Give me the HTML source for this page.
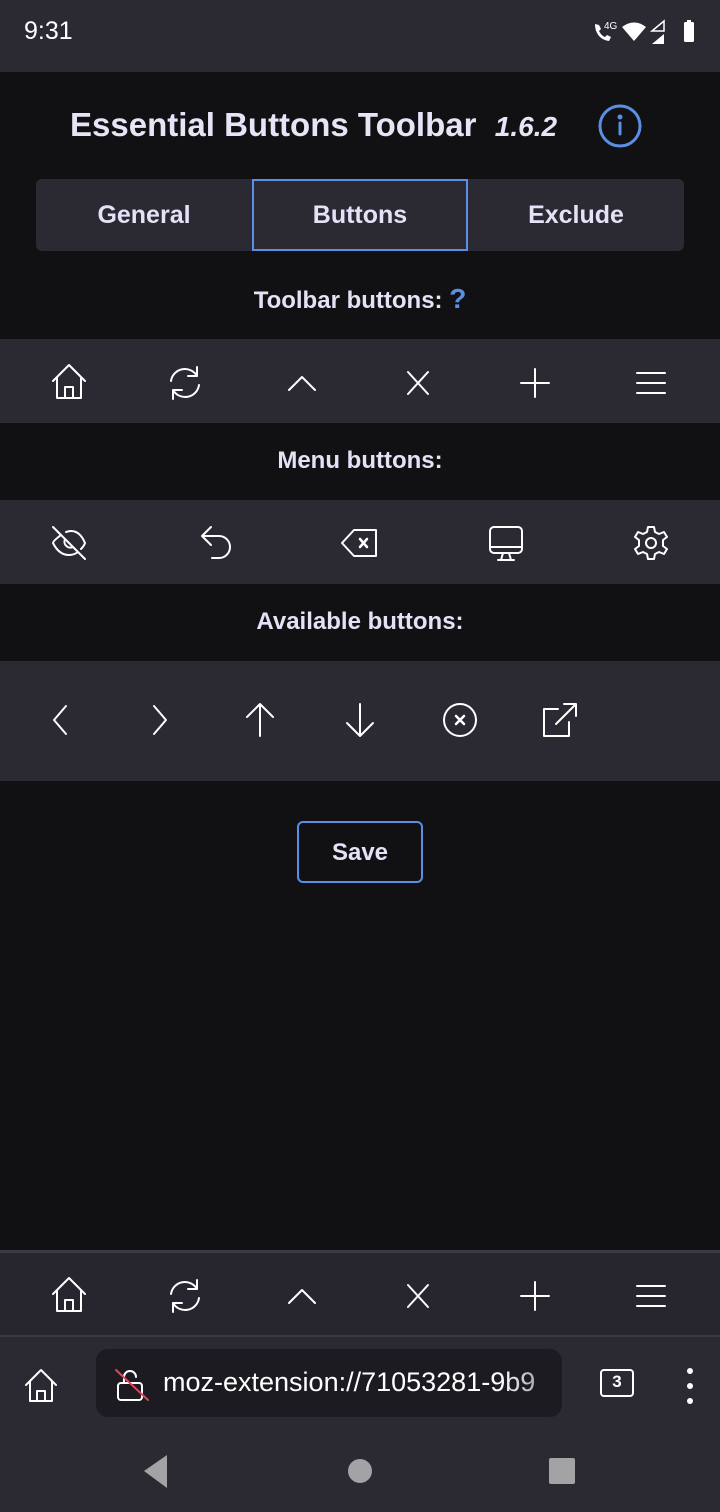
<!DOCTYPE html>
<html><head><meta charset="utf-8"><style>
*{margin:0;padding:0;box-sizing:border-box}
body{width:720px;height:1512px;background:#111113;font-family:"Liberation Sans",sans-serif;color:#e4e2f7;position:relative;overflow:hidden}
.abs{position:absolute}
.bar{position:absolute;left:0;width:720px;background:#2b2a33}
.t{position:absolute;left:0;width:720px;text-align:center;font-weight:bold;font-size:24px}
svg.i{position:absolute;overflow:visible}
svg.i *{fill:none;stroke:#fff;stroke-width:2;stroke-linecap:round;stroke-linejoin:round}
</style></head><body>
<div class="bar" style="top:0;height:72px"></div>
<div class="abs" style="left:24px;top:17px;font-size:25px;color:#fff">9:31</div>
<svg class="abs" style="left:592px;top:18px" width="112" height="28" viewBox="0 0 112 28">
<path d="M3 6c0 10 6 16 14 17l2-4-4-2-2 2c-3-1-5-4-6-6l2-2-2-4z" fill="#fff"/>
<text x="12" y="11" font-size="10" fill="#fff" font-family="Liberation Sans">4G</text>
<path d="M30 9q12-9 24 0l-12 14z" fill="#fff"/>
<path d="M60 13l12-10v10z" fill="none" stroke="#fff" stroke-width="1.5"/>
<path d="M60 26l12-10v10z" fill="#fff"/>
<rect x="92" y="4" width="10" height="20" rx="1.5" fill="#fff"/><rect x="95" y="2" width="4" height="3" fill="#fff"/>
</svg>
<div class="abs" style="left:70px;top:106px;font-size:33px;font-weight:bold;color:#e6e4f7;white-space:nowrap">Essential Buttons Toolbar&nbsp; <i style="font-size:28px;font-weight:bold">1.6.2</i></div>
<svg class="i" style="left:598px;top:104px" width="44" height="44"><circle cx="22" cy="22" r="20" style="stroke:#5b8fe6;stroke-width:3"/><line x1="22" y1="19" x2="22" y2="30" style="stroke:#5b8fe6;stroke-width:3"/><circle cx="22" cy="13" r="1.5" style="fill:#5b8fe6;stroke:#5b8fe6"/></svg>
<div class="abs" style="left:36px;top:179px;width:648px;height:72px;background:#2b2a33;border-radius:6px"></div>
<div class="abs" style="left:252px;top:179px;width:216px;height:72px;border:2px solid #5b8fe6"></div>
<div class="abs" style="left:36px;top:201px;width:216px;text-align:center;font-size:25px;font-weight:bold">General</div>
<div class="abs" style="left:252px;top:201px;width:216px;text-align:center;font-size:25px;font-weight:bold">Buttons</div>
<div class="abs" style="left:468px;top:201px;width:216px;text-align:center;font-size:25px;font-weight:bold">Exclude</div>
<div class="t" style="top:283px">Toolbar buttons: <span style="color:#5b8fe6;font-size:28px">?</span></div>
<div class="bar" style="top:339px;height:84px"></div>
<div class="t" style="top:447px">Menu buttons:</div>
<div class="bar" style="top:500px;height:84px"></div>
<div class="t" style="top:608px">Available buttons:</div>
<div class="bar" style="top:661px;height:120px"></div>
<div class="abs" style="left:297px;top:821px;width:126px;height:62px;border:2px solid #5b8fe6;border-radius:6px;text-align:center;line-height:60px;font-size:24px;font-weight:bold">Save</div>

<svg width="0" height="0" style="position:absolute"><defs>
<g id="home"><path d="M-16 -2L0 -18 16 -2M-12 -6V15H12V-6M-4 15V4H4V15"/></g>
<g id="ref"><path d="M-14 -2A14 14 0 0 1 12 -7M12 -16V-7H3M14 2A14 14 0 0 1 -12 7M-12 16V7H-3"/></g>
<g id="up"><path d="M-13 7L0 -6 13 7"/></g>
<g id="x"><path d="M-10 -11L10 11M10 -11L-10 11"/></g>
<g id="plus"><path d="M0 -14V14M-14 0H14"/></g>
<g id="menu"><path d="M-14 -10H14M-14 0H14M-14 10H14"/></g>
</defs></svg>
<svg class="i" style="left:0;top:0" width="720" height="1512">
<g transform="translate(69,383)"><use href="#home"/></g>
<g transform="translate(185,383)"><use href="#ref"/></g>
<g transform="translate(302,383)"><use href="#up"/></g>
<g transform="translate(418,383)"><use href="#x"/></g>
<g transform="translate(535,383)"><use href="#plus"/></g>
<g transform="translate(651,383)"><use href="#menu"/></g>
<g transform="translate(69,543)"><path d="M-8 -8Q-16 -2 -16 0Q-10 12 0 12Q5 12 9 9M-3 -11Q0 -12 2 -12Q11 -12 16 0Q15 3 12 6M-4 -4A6 6 0 0 0 4 4M-16 -16L16 16"/></g>
<g transform="translate(214,543)"><path d="M-3 -16L-12 -7 -3 2M-12 -7H5A10 10 0 0 1 5 15H-2"/></g>
<g transform="translate(360,543)"><path d="M-6 -13H16V13H-6L-18 0z"/><path d="M0 -4L7 4M7 -4L0 4" style="stroke-width:2.5"/></g>
<g transform="translate(506,543)"><rect x="-16" y="-16" width="32" height="26" rx="4"/><path d="M-16 4H16M-3 10L-5 17M3 10L5 17M-8 17H8"/></g>
<g transform="translate(651,543)"><circle r="5"/><path d="M-3 -16H3L4 -11 8 -9 13 -11 16 -6 12 -3V3L16 6 13 11 8 9 4 11 3 16H-3L-4 11-8 9-13 11-16 6-12 3V-3L-16 -6-13 -11-8 -9-4 -11z"/></g>
<g transform="translate(60,720)"><path d="M6 -14L-6 0 6 14"/></g>
<g transform="translate(160,720)"><path d="M-6 -14L6 0 -6 14"/></g>
<g transform="translate(260,720)"><path d="M0 16V-16M-13 -3L0 -16 13 -3"/></g>
<g transform="translate(360,720)"><path d="M0 -16V16M-13 3L0 16 13 3"/></g>
<g transform="translate(460,720)"><circle r="16"/><path d="M-4 -4L4 4M4 -4L-4 4" style="stroke-width:2.5"/></g>
<g transform="translate(560,720)"><path d="M-2 -11H-16V16H9V2M-4 4L15 -15M4 -16H16V-4"/></g>
</svg>

<div class="abs" style="left:0;top:1250px;width:720px;height:3px;background:#3b3a44"></div>
<div class="bar" style="top:1253px;height:82px;background:#27262e"></div>
<div class="abs" style="left:0;top:1335px;width:720px;height:2px;background:#3b3a44"></div>
<div class="bar" style="top:1337px;height:175px"></div>
<svg class="i" style="left:0;top:0" width="720" height="1512">
<g transform="translate(69,1296)"><use href="#home"/></g>
<g transform="translate(185,1296)"><use href="#ref"/></g>
<g transform="translate(302,1296)"><use href="#up"/></g>
<g transform="translate(418,1296)"><use href="#x"/></g>
<g transform="translate(535,1296)"><use href="#plus"/></g>
<g transform="translate(651,1296)"><use href="#menu"/></g>
<g transform="translate(41,1386)"><path d="M-15 -1L0 -16 15 -1M-11 -5V15H11V-5M-4 15V5H4V15"/></g>
</svg>
<div class="abs" style="left:96px;top:1349px;width:466px;height:68px;background:#1c1b22;border-radius:12px"></div>
<svg class="i" style="left:0;top:0" width="720" height="1512">
<g transform="translate(131,1385)"><rect x="-13" y="-2" width="24" height="17" rx="3"/><path d="M-7 -2V-8A6 6 0 0 1 5 -8"/><path d="M-15 -15L17 15" style="stroke:#e2455a"/></g>
<rect x="601" y="1370" width="32" height="26" rx="3"/>
</svg>
<div class="abs" style="left:163px;top:1367px;font-size:27px;color:#fff;white-space:nowrap;width:397px;overflow:hidden;-webkit-mask-image:linear-gradient(to right,#000 85%,rgba(0,0,0,0.4));mask-image:linear-gradient(to right,#000 85%,rgba(0,0,0,0.4))">moz-extension://71053281-9b9</div>
<div class="abs" style="left:601px;top:1372px;width:32px;text-align:center;font-size:17px;font-weight:bold;color:#fff">3</div>
<div class="abs" style="left:687px;top:1368px;width:6px;height:6px;border-radius:3px;background:#fff;box-shadow:0 15px 0 #fff,0 30px 0 #fff"></div>
<svg class="abs" style="left:0;top:1440px" width="720" height="60">
<path d="M144 31L167 15V48z" fill="#a3a3a6"/>
<ellipse cx="360" cy="31" rx="12" ry="12" fill="#a3a3a6"/>
<rect x="549" y="18" width="26" height="26" rx="2" fill="#a3a3a6"/>
</svg>
</body></html>
